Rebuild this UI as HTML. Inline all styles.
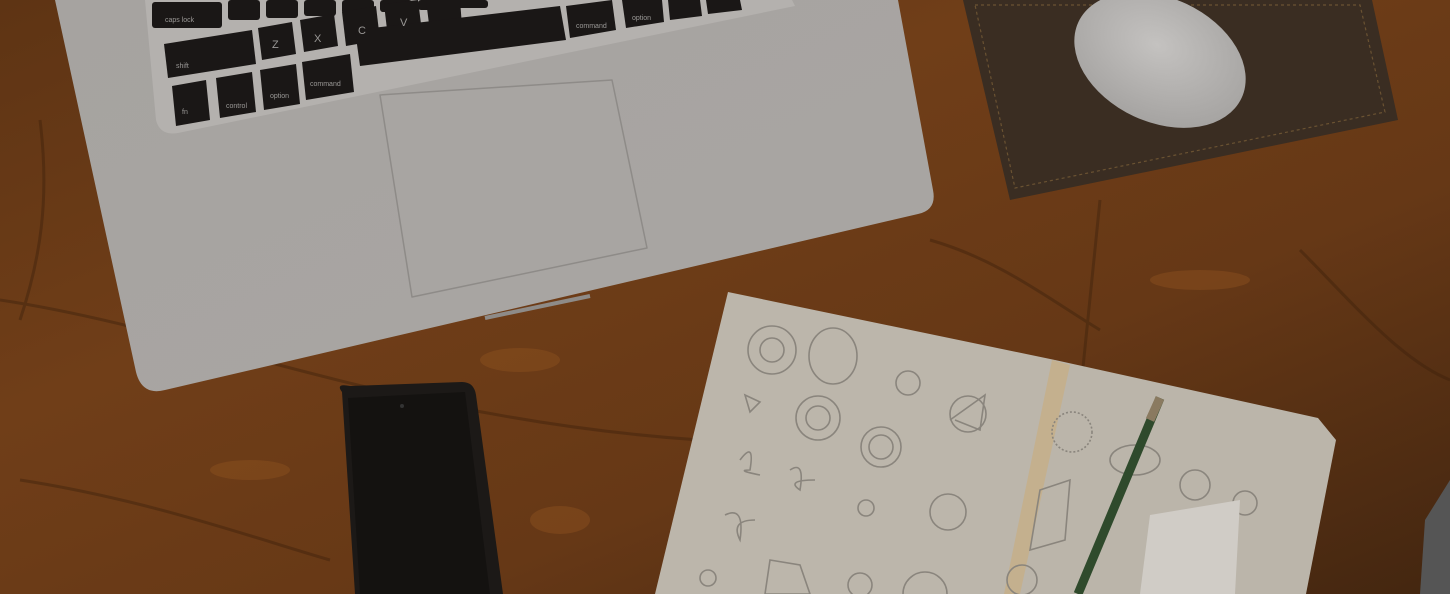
<!DOCTYPE html>
<html><head><meta charset="utf-8"><style>
html,body{margin:0;padding:0;width:1450px;height:594px;overflow:hidden;background:#4a2a12}
svg{display:block}
</style></head><body>
<svg width="1450" height="594" viewBox="0 0 1450 594" xmlns="http://www.w3.org/2000/svg">
<defs>
<linearGradient id="wood" x1="0" y1="0" x2="1" y2="1">
<stop offset="0" stop-color="#5e3414"/><stop offset="0.35" stop-color="#703e18"/><stop offset="0.65" stop-color="#663816"/><stop offset="1" stop-color="#432610"/>
</linearGradient>
<linearGradient id="lap" x1="0" y1="0" x2="1" y2="1">
<stop offset="0" stop-color="#a6a3a0"/><stop offset="1" stop-color="#a9a6a3"/>
</linearGradient>
<radialGradient id="mouse" cx="0.45" cy="0.4" r="0.6">
<stop offset="0" stop-color="#c4c2c0"/><stop offset="1" stop-color="#a6a4a2"/>
</radialGradient>
</defs>
<rect width="1450" height="594" fill="url(#wood)"/>
<g stroke="#3e220c" stroke-width="3" opacity="0.45" fill="none">
<path d="M0 300 C200 330 400 420 700 440"/><path d="M20 480 C150 500 260 540 330 560"/>
<path d="M1100 200 L1060 594"/><path d="M930 240 C1000 260 1050 300 1100 330"/>
<path d="M1300 250 C1350 300 1400 360 1450 380"/><path d="M40 120 C50 200 40 260 20 320"/>
</g>
<g fill="#8e521e" opacity="0.45">
<ellipse cx="520" cy="360" rx="40" ry="12"/><ellipse cx="560" cy="520" rx="30" ry="14"/>
<ellipse cx="1200" cy="280" rx="50" ry="10"/><ellipse cx="250" cy="470" rx="40" ry="10"/>
</g>
<polygon points="963,0 1372,0 1398,120 1010,200" fill="#3a2d22"/>
<polygon points="975,5 1360,5 1385,112 1015,188" fill="none" stroke="#6a5232" stroke-width="1.2" stroke-dasharray="3 3"/>
<ellipse cx="1160" cy="60" rx="90" ry="62" transform="rotate(25 1160 60)" fill="url(#mouse)"/>
<path d="M55 0 L898 0 L933 190 Q937 210 918 214 L165 390 Q142 396 136 372 Z" fill="url(#lap)"/>
<path d="M145 0 L792 0 L795 6 L178 133 Q160 136 156 120 Z" fill="#b4b1ae"/>
<g fill="#1a1716">
<rect x="152" y="2" width="70" height="26" rx="3"/><rect x="228" y="0" width="32" height="20" rx="3"/><rect x="266" y="0" width="32" height="18" rx="3"/><rect x="304" y="0" width="32" height="16" rx="3"/><rect x="342" y="0" width="32" height="14" rx="3"/><rect x="380" y="0" width="32" height="12" rx="3"/><rect x="418" y="0" width="32" height="10" rx="3"/><rect x="456" y="0" width="32" height="8" rx="3"/>
<polygon points="566,6 612,0 616,30 570,38"/><polygon points="622,0 662,0 664,22 626,28"/><polygon points="668,0 700,0 702,16 670,20"/><polygon points="706,0 740,0 742,10 708,14"/>
<polygon points="164,44 252,30 256,64 168,78"/><polygon points="258,28 292,22 296,54 262,60"/><polygon points="300,20 334,14 338,46 304,52"/><polygon points="342,12 376,6 380,40 346,46"/><polygon points="384,4 418,0 422,32 388,38"/><polygon points="426,0 460,0 462,26 430,32"/>
<polygon points="355,30 560,6 566,40 360,66"/>
<polygon points="172,86 206,80 210,120 176,126"/><polygon points="216,78 252,72 256,112 220,118"/><polygon points="260,70 296,64 300,104 264,110"/><polygon points="302,62 350,54 354,92 306,100"/>
</g>
<g fill="#9a9896" font-family="Liberation Sans, sans-serif" font-size="7">
<text x="165" y="22">caps lock</text><text x="176" y="68">shift</text><text x="182" y="114">fn</text><text x="226" y="108">control</text><text x="270" y="98">option</text><text x="310" y="86">command</text><text x="576" y="28">command</text><text x="632" y="20">option</text>
<text x="272" y="48" font-size="11">Z</text><text x="314" y="42" font-size="11">X</text><text x="358" y="34" font-size="11">C</text><text x="400" y="26" font-size="11">V</text>
</g>
<polygon points="380,95 612,80 647,248 412,297" fill="#a8a5a2" stroke="#8e8b88" stroke-width="1.5" stroke-linejoin="round"/>
<path d="M485 318 L590 296" stroke="#8e8b88" stroke-width="4"/>
<path d="M342 392 Q335 383 350 386 L462 382 Q474 382 476 395 L503 594 L355 594 Z" fill="#1c1917"/>
<path d="M348 398 L465 392 L490 594 L360 594 Z" fill="#141210"/>
<circle cx="402" cy="406" r="2" fill="#333"/>
<polygon points="728,292 1055,360 1005,594 655,594" fill="#bcb6ab"/>
<polygon points="1055,360 1318,418 1336,440 1306,594 1005,594" fill="#bbb5aa"/>
<polygon points="1052,360 1070,365 1020,594 1004,594" fill="#c4b08e"/>
<g fill="none" stroke="#8a857d" stroke-width="1.6">
<circle cx="772" cy="350" r="24"/><circle cx="772" cy="350" r="12"/>
<ellipse cx="833" cy="356" rx="24" ry="28"/><circle cx="818" cy="418" r="22"/><circle cx="818" cy="418" r="12"/>
<circle cx="881" cy="447" r="20"/><circle cx="881" cy="447" r="12"/><circle cx="908" cy="383" r="12"/>
<path d="M950 420 L985 395 L980 430 L955 420"/><circle cx="968" cy="414" r="18"/>
<path d="M740 460 Q755 440 750 470 Q735 470 760 475"/><path d="M790 470 Q805 460 800 490 Q785 480 815 480"/>
<path d="M725 515 Q745 505 740 540 Q730 520 755 520"/><circle cx="948" cy="512" r="18"/><circle cx="866" cy="508" r="8"/>
<circle cx="708" cy="578" r="8"/><path d="M770 560 L800 565 L810 594 L765 594 Z"/><circle cx="860" cy="585" r="12"/><circle cx="925" cy="594" r="22"/>
<path d="M745 395 L760 402 L750 412 Z"/>
<ellipse cx="1135" cy="460" rx="25" ry="15"/><circle cx="1195" cy="485" r="15"/><circle cx="1245" cy="503" r="12"/>
<path d="M1040 490 L1070 480 L1065 540 L1030 550 Z"/><circle cx="1022" cy="580" r="15"/><circle cx="1072" cy="432" r="20" stroke-dasharray="2 2"/>
</g>
<path d="M1160 398 L1078 594" stroke="#2f4a2c" stroke-width="9"/>
<path d="M1160 398 L1150 420" stroke="#8a7a60" stroke-width="9"/>
<polygon points="1150,515 1240,500 1235,594 1140,594" fill="#d0ccc6"/>
<polygon points="1425,520 1450,480 1450,594 1420,594" fill="#555"/>
</svg>
</body></html>
